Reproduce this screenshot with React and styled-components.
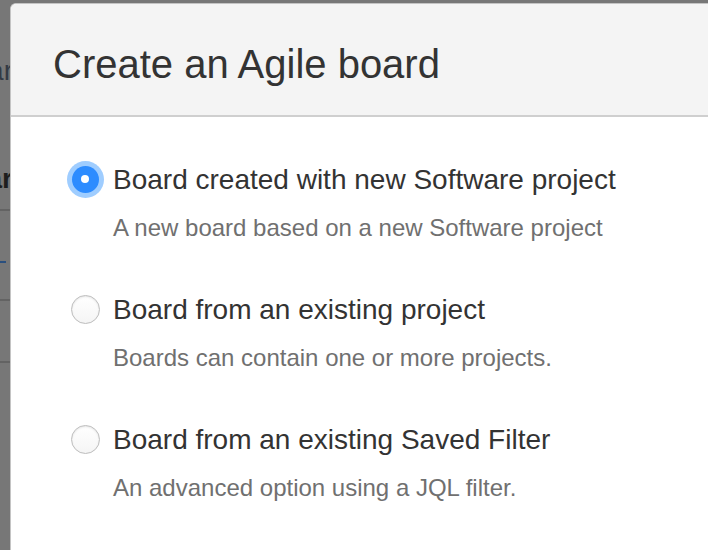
import React from "react";
import styled, { createGlobalStyle } from "styled-components";

const GlobalStyle = createGlobalStyle`
  html, body {
    margin: 0;
    padding: 0;
    background: #777777;
    font-family: "Liberation Sans", Arial, Helvetica, sans-serif;
  }
`;

const options = [
  {
    id: "software",
    title: "Board created with new Software project",
    description: "A new board based on a new Software project",
  },
  {
    id: "existing",
    title: "Board from an existing project",
    description: "Boards can contain one or more projects.",
  },
  {
    id: "filter",
    title: "Board from an existing Saved Filter",
    description: "An advanced option using a JQL filter.",
  },
];

const App = () => {
  const [selected, setSelected] = React.useState("software");

  return (
    <>
      <GlobalStyle />
      <Screen>
        {/* the page left behind the dialog, mostly hidden */}
        <PageBehind>
          <PageText top={52}>ar</PageText>
          <PageText top={76} bold>
            ar
          </PageText>
          <PageRule top={14} />
          <PageLink top={50} />
          <PageRule top={36} />
          <PageRule top={60} />
        </PageBehind>

        <Dialog>
          <Header>
            <Heading>Create an Agile board</Heading>
          </Header>
          <Body>
            {options.map((opt) => (
              <Option key={opt.id} onClick={() => setSelected(opt.id)}>
                <RadioCell>
                  <Radio checked={selected === opt.id} />
                </RadioCell>
                <OptionText>
                  <OptionTitle>{opt.title}</OptionTitle>
                  <OptionDesc>{opt.description}</OptionDesc>
                </OptionText>
              </Option>
            ))}
          </Body>
        </Dialog>
      </Screen>
    </>
  );
};

const Screen = styled.div`
  display: flex;
  height: 550px;
  padding-top: 3px;
  box-sizing: border-box;
  overflow: hidden;
`;

const PageBehind = styled.div`
  width: 10px;
  flex-shrink: 0;
  display: flex;
  flex-direction: column;
  align-items: flex-end;
  overflow: hidden;
`;

const PageText = styled.div`
  margin-top: ${(p) => p.top}px;
  font-size: 28px;
  line-height: 32px;
  font-weight: ${(p) => (p.bold ? 700 : 400)};
  color: ${(p) => (p.bold ? "#1e1e1e" : "#333a44")};
  white-space: nowrap;
  margin-right: -3px;
`;

const PageRule = styled.div`
  margin-top: ${(p) => p.top}px;
  width: 10px;
  height: 2px;
  background: #636363;
`;

const PageLink = styled.div`
  margin-top: ${(p) => p.top}px;
  width: 6px;
  height: 2px;
  align-self: flex-start;
  background: #2a4f7e;
`;

const Dialog = styled.div`
  flex: 1;
  display: flex;
  flex-direction: column;
  background: #ffffff;
  border-top: 1px solid #c4c4c4;
  border-left: 1px solid #c4c4c4;
  border-top-left-radius: 6px;
  overflow: hidden;
`;

const Header = styled.div`
  background: #f4f4f4;
  border-bottom: 2px solid #cfcfcf;
  padding: 36px 42px 27px;
`;

const Heading = styled.h1`
  margin: 0;
  font-size: 40px;
  line-height: 48px;
  font-weight: 400;
  color: #333333;
`;

const Body = styled.div`
  display: flex;
  flex-direction: column;
  gap: 50px;
  padding: 46px 0 0 54px;
`;

const Option = styled.div`
  display: flex;
  gap: 8px;
  cursor: pointer;
`;

const RadioCell = styled.div`
  width: 40px;
  height: 32px;
  display: flex;
  align-items: center;
  justify-content: center;
`;

const Radio = styled.span`
  box-sizing: border-box;
  border-radius: 50%;
  position: relative;
  width: ${(p) => (p.checked ? 27 : 29)}px;
  height: ${(p) => (p.checked ? 27 : 29)}px;
  background: ${(p) =>
    p.checked ? "#2d8cff" : "linear-gradient(#ffffff, #f5f5f5)"};
  border: ${(p) => (p.checked ? "none" : "1.5px solid #bdbdbd")};
  box-shadow: ${(p) =>
    p.checked
      ? "0 0 0 5px #9fcdff"
      : "inset 0 1px 2px rgba(0, 0, 0, 0.1)"};

  &::after {
    content: "";
    display: ${(p) => (p.checked ? "block" : "none")};
    position: absolute;
    left: 50%;
    top: 50%;
    width: 8px;
    height: 8px;
    margin: -4px 0 0 -4px;
    border-radius: 50%;
    background: #ffffff;
  }
`;

const OptionText = styled.div`
  display: flex;
  flex-direction: column;
  gap: 16px;
`;

const OptionTitle = styled.div`
  font-size: 28px;
  line-height: 34px;
  color: #333333;
`;

const OptionDesc = styled.div`
  font-size: 24px;
  line-height: 30px;
  color: #707070;
`;

export default App;
